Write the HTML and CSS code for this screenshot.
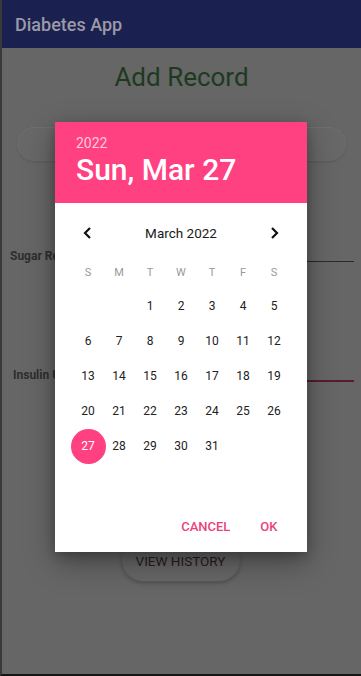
FILE: index.html
```html
<!DOCTYPE html>
<html>
<head>
<meta charset="utf-8">
<link rel="stylesheet" href="styles.css">
</head>
<body>
<div class="screen">
  <header class="appbar">Diabetes App</header>
  <main class="content">
    <h1 class="title">Add Record</h1>
    <div class="pill-input"></div>
    <div class="field field-sugar">
      <span class="label">Sugar Reading</span>
      <span class="line line-dark"></span>
    </div>
    <div class="field field-insulin">
      <span class="label">Insulin Units</span>
      <span class="line line-pink"></span>
    </div>
    <div class="btn-row"><button class="history-btn">VIEW HISTORY</button></div>
  </main>

  <div class="dialog">
    <div class="dlg-header">
      <div class="dlg-year">2022</div>
      <div class="dlg-date">Sun, Mar 27</div>
    </div>
    <div class="dlg-body">
      <div class="month-row">
        <svg class="chev" width="12" height="14" viewBox="0 0 12 14"><path d="M8 2 L3 7 L8 12" fill="none" stroke="#111" stroke-width="2.2"/></svg>
        <span class="month">March 2022</span>
        <svg class="chev" width="12" height="14" viewBox="0 0 12 14"><path d="M4 2 L9 7 L4 12" fill="none" stroke="#111" stroke-width="2.2"/></svg>
      </div>
      <div class="week">
        <span>S</span><span>M</span><span>T</span><span>W</span><span>T</span><span>F</span><span>S</span>
      </div>
      <div class="days">
        <span></span><span></span>
        <span>1</span><span>2</span><span>3</span><span>4</span><span>5</span>
        <span>6</span><span>7</span><span>8</span><span>9</span><span>10</span><span>11</span><span>12</span>
        <span>13</span><span>14</span><span>15</span><span>16</span><span>17</span><span>18</span><span>19</span>
        <span>20</span><span>21</span><span>22</span><span>23</span><span>24</span><span>25</span><span>26</span>
        <span class="sel">27</span><span>28</span><span>29</span><span>30</span><span>31</span>
      </div>
      <div class="actions">
        <span class="act">CANCEL</span>
        <span class="act">OK</span>
      </div>
    </div>
  </div>
</div>
</body>
</html>
```

FILE: styles.css
```css
* { box-sizing: border-box; }
html, body { margin: 0; padding: 0; }
body {
  width: 361px;
  height: 676px;
  overflow: hidden;
  font-family: Roboto, "Liberation Sans", sans-serif;
  background: #666;
}
.screen {
  position: relative;
  width: 361px;
  height: 676px;
  background: #666;
  border-left: 2px solid #3a3a3a;
  border-bottom: 2px solid #151515;
  overflow: hidden;
}
.appbar {
  height: 48px;
  margin-left: -2px;
  background: #1a2050;
  color: #9a9aa6;
  font-size: 18px;
  font-weight: 500;
  padding-left: 15px;
  display: flex;
  align-items: center;
}
.content {
  display: flex;
  flex-direction: column;
}
.title {
  margin: 14px 0 0;
  text-align: center;
  font-size: 26px;
  font-weight: 400;
  color: #1d3a1f;
  line-height: 30px;
}
.pill-input {
  margin: 36px 16px 0 16px;
  height: 32px;
  border-radius: 16px;
  background: #686868;
  box-shadow: 0 0 0 1px rgba(120,120,120,0.6), 0 1px 3px rgba(0,0,0,0.25);
}
.field {
  display: flex;
  align-items: flex-end;
  padding-right: 7px;
}
.field-sugar { margin-top: 89px; padding-left: 8px; }
.field-insulin { margin-top: 105px; padding-left: 11px; }
.label {
  font-size: 12px;
  font-weight: 700;
  color: #2e2e2e;
  white-space: nowrap;
  line-height: 14px;
}
.line {
  flex: 1;
  margin-left: 6px;
}
.line-dark { height: 1px; background: #2a2a2a; margin-bottom: 1px; }
.line-pink { height: 2px; background: #5a1a33; }
.btn-row {
  display: flex;
  justify-content: center;
  margin-top: 157px;
  padding-right: 2px;
}
.history-btn {
  width: 118px;
  height: 42px;
  border: none;
  border-radius: 21px;
  background: #676767;
  box-shadow: 0 2px 4px rgba(0,0,0,0.25), 0 0 0 1px rgba(110,110,110,0.5);
  color: #2a1a1e;
  font-family: Roboto, "Liberation Sans", sans-serif;
  font-size: 13.5px;
  font-weight: 400;
  padding: 0;
  padding-top: 2px;
}

/* dialog overlay */
.dialog {
  position: absolute;
  left: 53px;
  top: 122px;
  width: 252px;
  height: 430px;
  background: #fff;
  box-shadow: 0 10px 28px rgba(0,0,0,0.35), 0 4px 10px rgba(0,0,0,0.2);
  display: flex;
  flex-direction: column;
}
.dlg-header {
  height: 81px;
  background: #ff4081;
  padding: 13px 0 0 21px;
}
.dlg-year {
  font-size: 14px;
  line-height: 16px;
  color: rgba(255,255,255,0.72);
}
.dlg-date {
  font-size: 30px;
  font-weight: 500;
  line-height: 34px;
  color: #fff;
  margin-top: 2px;
}
.dlg-body {
  flex: 1;
  padding: 0 17.5px;
  display: flex;
  flex-direction: column;
}
.month-row {
  height: 30px;
  margin-top: 15px;
  display: grid;
  grid-template-columns: 31px 1fr 31px;
  align-items: center;
  justify-items: center;
}
.month {
  font-size: 13.5px;
  font-weight: 400;
  color: #1a1a1a;
}
.week {
  margin-top: 14px;
  height: 20px;
  display: grid;
  grid-template-columns: repeat(7, 31px);
  align-items: center;
  justify-items: center;
  font-size: 11px;
  color: #999;
}
.days {
  margin-top: 6.5px;
  display: grid;
  grid-template-columns: repeat(7, 31px);
  grid-auto-rows: 35px;
  align-items: center;
  justify-items: center;
  font-size: 12px;
  color: #222;
}
.days span {
  display: flex;
  align-items: center;
  justify-content: center;
  width: 35px;
  height: 35px;
}
.days .sel {
  background: #ff4081;
  color: #fff;
  border-radius: 50%;
}
.actions {
  margin-top: auto;
  margin-bottom: 8px;
  height: 36px;
  display: flex;
  justify-content: flex-end;
  align-items: center;
  gap: 30px;
  padding-right: 12px;
}
.act {
  font-size: 13px;
  font-weight: 500;
  color: #ec3f7e;
}
```
